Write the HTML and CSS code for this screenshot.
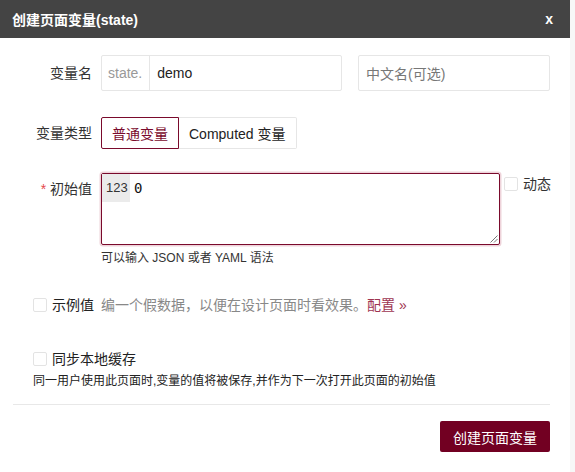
FILE: index.html
```html
<!DOCTYPE html>
<html lang="zh-CN">
<head>
<meta charset="utf-8">
<title>创建页面变量</title>
<link rel="stylesheet" href="styles.css">
</head>
<body>
<div class="modal">
  <div class="header">
    <span class="title">创建页面变量(state)</span>
    <span class="close">x</span>
  </div>
  <div class="content">
    <div class="row row-name">
      <div class="lbl">变量名</div>
      <div class="igroup">
        <span class="addon">state.</span>
        <span class="ival">demo</span>
      </div>
      <div class="input2">中文名(可选)</div>
    </div>
    <div class="row row-type">
      <div class="lbl">变量类型</div>
      <div class="btngroup">
        <span class="seg seg-active">普通变量</span>
        <span class="seg">Computed 变量</span>
      </div>
    </div>
    <div class="row row-init">
      <div class="lbl lbl-init"><span class="star">*</span> 初始值</div>
      <div class="editor">
        <span class="gutter">123</span><span class="code">0</span>
        <svg class="grip" width="8" height="8" viewBox="0 0 8 8"><path d="M7.5 0.5 L0.5 7.5 M7.5 4 L4 7.5" stroke="#777" stroke-width="1" fill="none"/></svg>
      </div>
      <div class="dyn"><span class="cb"></span><span>动态</span></div>
    </div>
    <div class="hint">可以输入 JSON 或者 YAML 语法</div>
    <div class="crow crow-sample">
      <span class="cb"></span><span class="clbl">示例值</span><span class="muted">编一个假数据，以便在设计页面时看效果。</span><span class="link">配置 »</span>
    </div>
    <div class="crow crow-sync">
      <span class="cb"></span><span class="clbl">同步本地缓存</span>
    </div>
    <div class="desc">同一用户使用此页面时,变量的值将被保存,并作为下一次打开此页面的初始值</div>
    <div class="divider"></div>
    <div class="footer">
      <span class="primary">创建页面变量</span>
    </div>
  </div>
</div>
</body>
</html>
```

FILE: styles.css
```css
* { box-sizing: border-box; }

body {
  margin: 0;
  background: #f7f7f7;
  font-family: "Liberation Sans", "Noto Sans CJK SC", sans-serif;
  color: #333;
}

.modal {
  width: 570px;
  height: 472px;
  background: #fff;
}

.header {
  height: 38px;
  background: #444;
  color: #fff;
  display: flex;
  align-items: center;
  justify-content: space-between;
  padding: 0 17px 0 12px;
  font-size: 14px;
  font-weight: bold;
}

.content {
  padding: 17px 20px 0 13px;
}

.row {
  display: flex;
  align-items: center;
}

.lbl {
  flex-shrink: 0;
  width: 79px;
  margin-right: 9px;
  text-align: right;
  font-size: 14px;
  line-height: 20px;
}

.row-name { height: 36px; }

.igroup {
  flex-shrink: 0;
  width: 241px;
  height: 36px;
  border: 1px solid #e6e6e6;
  border-radius: 2px;
  display: flex;
  font-size: 14px;
  margin-right: 16px;
}

.addon {
  color: #999;
  padding: 0 7px 0 6px;
  border-right: 1px solid #e6e6e6;
  display: flex;
  align-items: center;
}

.ival {
  padding-left: 7px;
  display: flex;
  align-items: center;
  color: #222;
}

.input2 {
  flex-shrink: 0;
  width: 192px;
  height: 36px;
  border: 1px solid #e6e6e6;
  border-radius: 2px;
  font-size: 14px;
  color: #777;
  padding-left: 7px;
  display: flex;
  align-items: center;
}

.row-type {
  margin-top: 26px;
  height: 32px;
}

.btngroup {
  display: flex;
  height: 32px;
}

.seg {
  display: flex;
  align-items: center;
  padding: 0 11px 0 10px;
  font-size: 14px;
  border: 1px solid #e6e6e6;
  border-left: none;
  color: #222;
  border-radius: 0 2px 2px 0;
  white-space: nowrap;
}

.seg-active {
  padding: 0 10px;
  border: 1px solid #7a0a2c;
  color: #7a0a2c;
  border-radius: 2px 0 0 2px;
}

.row-init {
  margin-top: 24px;
  align-items: flex-start;
}

.lbl-init { padding-top: 6px; }

.star {
  color: #e5484d;
}

.editor {
  flex-shrink: 0;
  position: relative;
  width: 399px;
  height: 72px;
  border: 1px solid #7a0a2c;
  border-radius: 2px;
  box-shadow: 0 0 0 1.5px #eed3da;
  display: flex;
  align-items: flex-start;
}

.gutter {
  background: #ebebeb;
  width: 28px;
  height: 28px;
  line-height: 28px;
  font-size: 13px;
  padding-left: 4px;
  color: #333;
}

.code {
  margin-left: 4px;
  font-family: "DejaVu Sans Mono", "Liberation Mono", monospace;
  font-size: 14px;
  line-height: 28px;
  color: #111;
}

.grip {
  position: absolute;
  right: 1px;
  bottom: 1px;
}

.dyn {
  flex-shrink: 0;
  white-space: nowrap;
  display: flex;
  align-items: center;
  margin-left: 4px;
  margin-top: 1px;
  font-size: 14px;
  line-height: 20px;
}

.cb {
  flex-shrink: 0;
  display: inline-block;
  width: 14px;
  height: 14px;
  border: 1px solid #e3e3e3;
  border-radius: 2px;
  background: #fff;
  margin-right: 5px;
}

.hint {
  margin-top: 5px;
  padding-left: 88px;
  font-size: 12px;
  line-height: 16px;
  color: #333;
}

.crow {
  display: flex;
  align-items: center;
  padding-left: 20px;
  height: 20px;
  font-size: 14px;
  line-height: 20px;
  white-space: nowrap;
}

.crow-sample { margin-top: 29px; }
.crow-sync { margin-top: 34px; }

.clbl { color: #222; }

.muted {
  color: #888;
  margin-left: 7px;
}

.link {
  color: #9e3451;
}

.desc {
  margin-top: 4px;
  padding-left: 20px;
  font-size: 12px;
  line-height: 16px;
  color: #222;
}

.divider {
  margin-top: 15px;
  height: 1px;
  background: #e8e8e8;
}

.footer {
  margin-top: 16px;
  display: flex;
  justify-content: flex-end;
}

.primary {
  display: flex;
  align-items: center;
  justify-content: center;
  width: 110px;
  height: 31px;
  background: #720022;
  color: #fff;
  font-size: 14px;
  border-radius: 2px;
}
```
